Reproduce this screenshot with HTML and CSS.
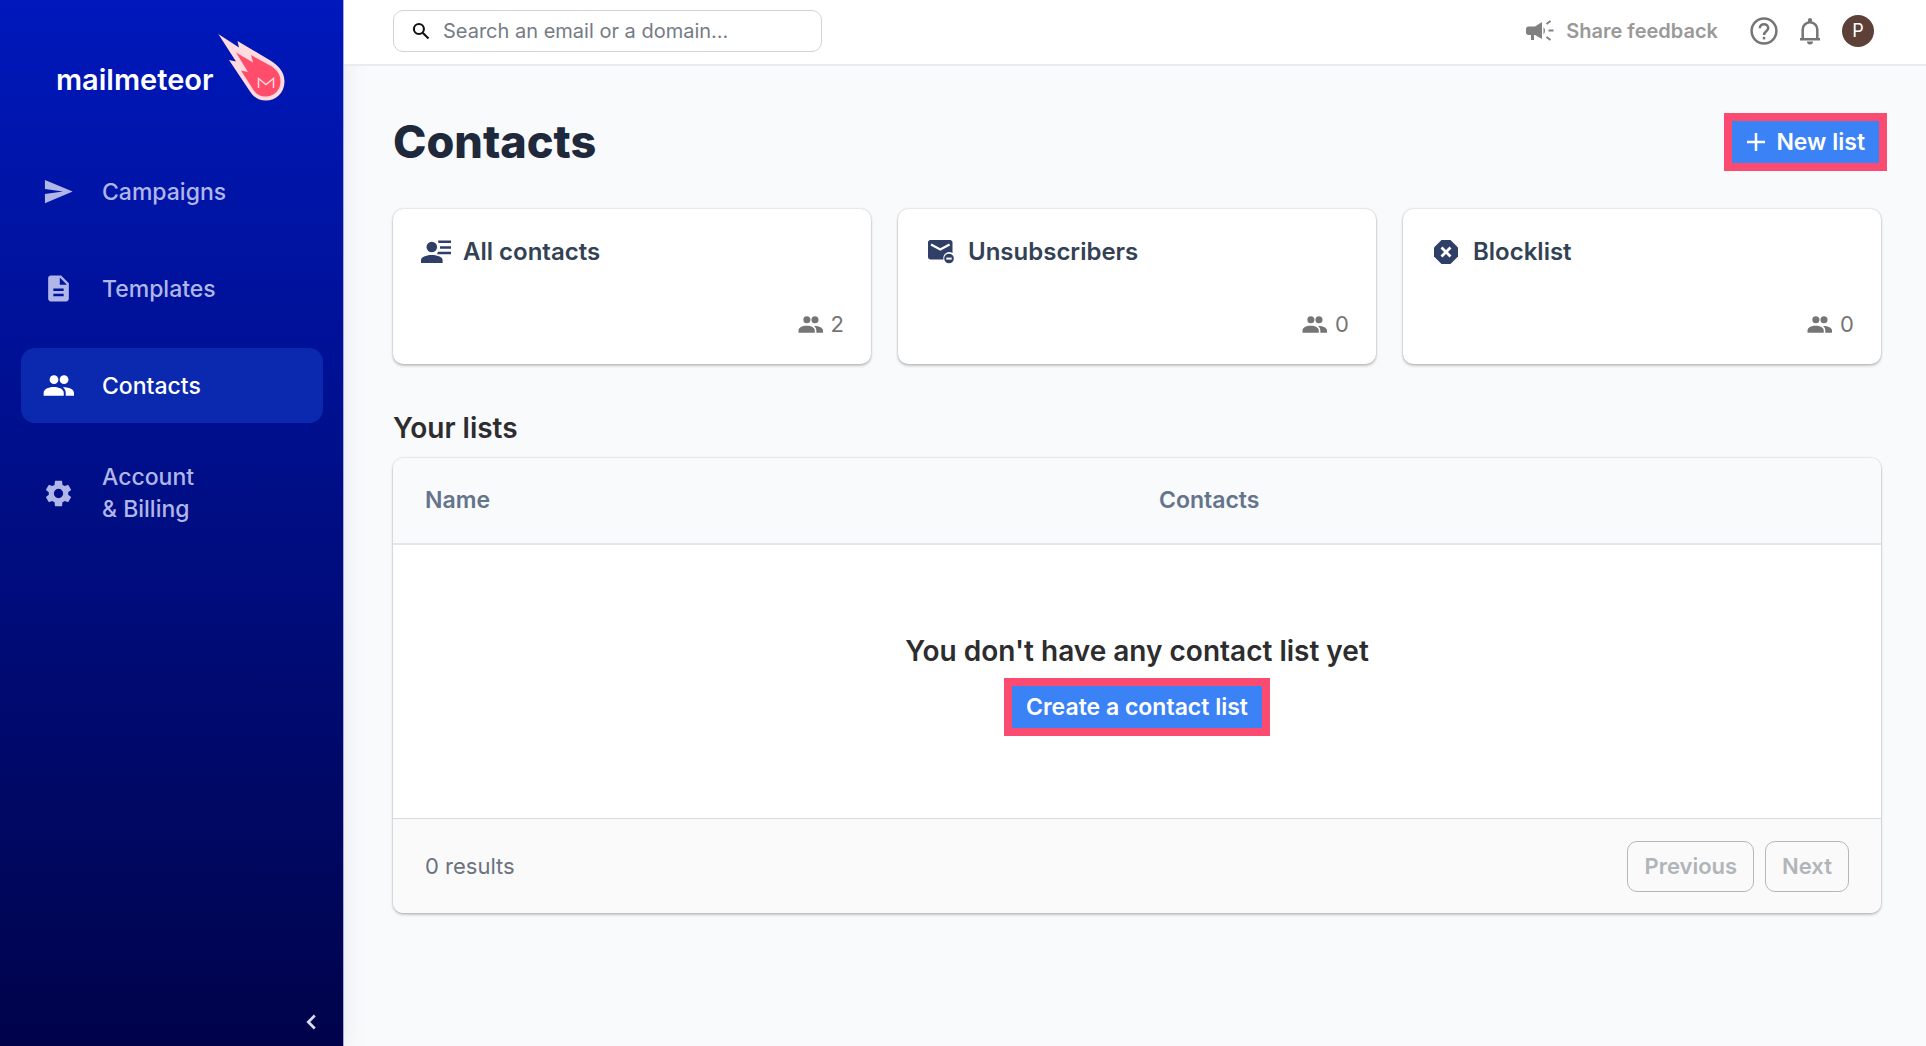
FILE: index.html
```html
<!DOCTYPE html>
<html lang="en">
<head>
    <meta charset="UTF-8">
    <meta name="viewport" content="width=device-width, initial-scale=1">
    <title>Contacts - Mailmeteor</title>
    <link rel="stylesheet" href="styles.css">
</head>
<body>
<!-- Shared icons -->
<svg class="sprite" aria-hidden="true">
    <symbol id="icon-people" viewBox="0 0 24 24">
        <circle cx="8.5" cy="7.5" r="3.4"/>
        <circle cx="16.3" cy="7.5" r="3.4"/>
        <path d="M0.5 20v-2.200c0-2.900 3.500-4.600 7.800-4.600s7.800 1.700 7.800 4.600V20zM17.600 20v-2.300c0-1.800-.8-3.200-2.200-4.300 4.600-.1 8.600 1.500 8.600 4.400V20z"/>
    </symbol>
</svg>

<div class="app">
    <aside class="sidebar">
        <a class="logo" href="#">
            <span>mailmeteor</span>
            <svg class="logo-meteor" viewBox="0 0 68 68" aria-hidden="true">
                <path fill="#ffdade" d="M1.300 1 22 14.500 20.500 8 52.500 27C60 31.500 67.500 38 67.500 48.500 67.500 60 59 67.500 49 67.500 41 67.500 36 63.500 32 57L12 27 19 28.500z"/>
                <path fill="#ff4d6b" d="M19 19.500 36 29.500 34 22 54 33C59 36 63.500 41 63.500 48.500 63.500 57 57 63.500 49 63.500 42.500 63.500 38.500 60.500 35.500 55.500L24 37.500 31 39z"/>
                <path fill="none" stroke="#ffdade" stroke-width="1.500" d="M41.500 55V45.500L49 51.500 56.500 45.500V55"/>
            </svg>
        </a>
        <nav class="menu">
            <a class="menu-item" href="#">
                <svg viewBox="0 0 24 24"><path d="M1.500 21 23 12 1.500 3v7l14 2-14 2z"/></svg>
                <span>Campaigns</span>
            </a>
            <a class="menu-item" href="#">
                <svg viewBox="0 0 24 24"><path d="M14 2H6c-1.100 0-2 .9-2 2v16c0 1.100.9 2 2 2h12c1.100 0 2-.9 2-2V8zm2 16H8v-2h8zm0-4H8v-2h8zm-3-5V3.500L18.500 9z"/></svg>
                <span>Templates</span>
            </a>
            <a class="menu-item active" href="#" aria-current="page">
                <svg><use href="#icon-people"/></svg>
                <span>Contacts</span>
            </a>
            <a class="menu-item" href="#">
                <svg viewBox="0 0 24 24"><path d="M19.500 12.940c.04-.3.060-.61.060-.94s-.02-.64-.07-.94l2.030-1.580a.49.49 0 0 0 .12-.61l-1.920-3.320a.49.49 0 0 0-.59-.22l-2.390.96a7 7 0 0 0-1.620-.94l-.36-2.840a.48.48 0 0 0-.48-.41h-4.560a.48.48 0 0 0-.47.410l-.36 2.840a7.400 7.400 0 0 0-1.620.94l-2.390-.96a.48.48 0 0 0-.59.220L2.370 8.870a.47.47 0 0 0 .12.610l2.030 1.580a6 6 0 0 0 0 1.880l-2.030 1.580a.49.49 0 0 0-.12.610l1.920 3.320c.12.220.37.290.59.220l2.390-.96c.5.380 1.030.7 1.620.94l.36 2.840c.05.240.24.410.48.410h4.560c.24 0 .44-.17.470-.41l.36-2.840a7 7 0 0 0 1.620-.94l2.390.96c.22.080.47 0 .59-.22l1.920-3.320a.47.47 0 0 0-.12-.61zM12 15.600a3.600 3.600 0 1 1 0-7.200 3.600 3.600 0 0 1 0 7.200z"/></svg>
                <span>Account<br>&amp; Billing</span>
            </a>
        </nav>
        <button class="collapse" type="button" aria-label="Collapse menu">
            <svg viewBox="0 0 24 24"><path d="m15 5-7 7 7 7"/></svg>
        </button>
    </aside>

    <div class="page">
        <header class="topbar">
            <label class="search">
                <svg viewBox="0 0 24 24" aria-hidden="true"><circle cx="9.500" cy="9.500" r="6"/><path d="m14 14 7 7"/></svg>
                <input type="search" placeholder="Search an email or a domain..." aria-label="Search an email or a domain">
            </label>
            <div class="actions">
                <a class="feedback" href="#">
                    <svg viewBox="0 0 28 24" aria-hidden="true">
                        <path d="M2.500 7.500H9L16 3v17l-7-4H8v5H5v-5H2.500C1 16 0 15 0 13.500V10c0-1.500 1-2.500 2.500-2.500zM17.500 8c2 2 2 5.500 0 7.500z"/>
                        <path class="rays" d="m20.500 5 4-3M22.500 11.500h5M20.500 18l4 3"/>
                    </svg>
                    <span>Share feedback</span>
                </a>
                <button class="icon-button" type="button" aria-label="Help">
                    <svg viewBox="0 0 28 28"><circle cx="14" cy="14" r="12.400"/><path d="M9.800 11.200c0-5.500 8.400-5.300 8.400-.2 0 3.200-4.200 3.400-4.200 7"/><path d="M14 19.800v2.600"/></svg>
                </button>
                <button class="icon-button" type="button" aria-label="Notifications">
                    <svg viewBox="0 0 28 28"><path d="M4 22.300h20M6.700 22V12.500a7.300 7.300 0 0 1 14.600 0V22"/><path class="solid" d="M12 5V3a2 2 0 0 1 4 0v2zM11 24.500h6a3 3 0 0 1-6 0z"/></svg>
                </button>
                <button class="avatar" type="button" aria-label="Account">P</button>
            </div>
        </header>

        <main class="content">
            <div class="title-row">
                <h1>Contacts</h1>
                <button class="primary" type="button">
                    <svg viewBox="0 0 20 20" aria-hidden="true"><path d="M10 1v18M1 10h18"/></svg>
                    New list
                </button>
            </div>

            <div class="cards">
                <a class="card" href="#">
                    <span class="card-title">
                        <svg viewBox="0 0 30 24" aria-hidden="true">
                            <circle cx="10.800" cy="7" r="5.300"/>
                            <path d="M0 23v-3c0-2.600 4.500-5 10.800-5s10.800 2.400 10.800 5v3z"/>
                            <path d="M17 .5h13V3H17.500zM19 6.300h11v2.500H19zM17 11.700h13v2.500H16z"/>
                        </svg>
                        All contacts
                    </span>
                    <span class="card-count"><svg aria-hidden="true"><use href="#icon-people"/></svg>2</span>
                </a>
                <a class="card" href="#">
                    <span class="card-title">
                        <svg viewBox="0 0 26 24" aria-hidden="true">
                            <path d="M2.500 0h19.500c1.400 0 2.500 1 2.500 2.500V13a6 6 0 0 0-9 6.500h-13C1 19.500 0 18.500 0 17V2.500C0 1 1 0 2.500 0z"/>
                            <path fill="none" stroke="#fff" stroke-width="2.200" d="m3 4.500 9.300 5 9.300-5"/>
                            <circle cx="21" cy="18.500" r="4.800"/>
                            <path fill="#fff" d="M18.300 17.600h5.400v2h-5.400z"/>
                        </svg>
                        Unsubscribers
                    </span>
                    <span class="card-count"><svg aria-hidden="true"><use href="#icon-people"/></svg>0</span>
                </a>
                <a class="card" href="#">
                    <span class="card-title">
                        <svg viewBox="0 0 24 24" aria-hidden="true">
                            <path d="M7.500 0h9L24 7.500v9L16.500 24h-9L0 16.500v-9z"/>
                            <path fill="none" stroke="#fff" stroke-width="2.800" d="m7.500 7.500 9 9M16.500 7.500l-9 9"/>
                        </svg>
                        Blocklist
                    </span>
                    <span class="card-count"><svg aria-hidden="true"><use href="#icon-people"/></svg>0</span>
                </a>
            </div>

            <h2>Your lists</h2>
            <section class="panel">
                <table class="lists">
                    <thead>
                        <tr>
                            <th scope="col">Name</th>
                            <th scope="col">Contacts</th>
                        </tr>
                    </thead>
                    <tbody>
                        <tr>
                            <td class="empty" colspan="2">
                                <p>You don't have any contact list yet</p>
                                <button class="primary" type="button">Create a contact list</button>
                            </td>
                        </tr>
                    </tbody>
                </table>
                <footer class="panel-footer">
                    <span>0 results</span>
                    <div class="pager">
                        <button type="button" disabled>Previous</button>
                        <button type="button" disabled>Next</button>
                    </div>
                </footer>
            </section>
        </main>
    </div>
</div>
</body>
</html>
```
FILE: styles.css
```css
* {
    box-sizing: border-box;
}

body {
    margin: 0;
    font-family: Inter, sans-serif;
    font-size: 22px;
    line-height: 32px;
    color: #2d2d2f;
    background-color: #f9fafc;
}

button,
input {
    font: inherit;
}

button {
    cursor: pointer;
}

a {
    color: inherit;
    text-decoration: none;
}

.sprite {
    display: none;
}

.app {
    display: flex;
    min-height: 100vh;
}

/* Sidebar */
.sidebar {
    display: flex;
    flex-direction: column;
    flex: 0 0 344px;
    padding: 33px 20px 8px 21px;
    background: linear-gradient(#0018bc, #00034a);
    border-right: 1px solid #a9abd6;
    box-shadow: 0 0 24px rgba(0, 0, 60, 0.08);
}

.logo {
    display: flex;
    align-items: center;
    gap: 4px;
    height: 68px;
    margin-bottom: 53px;
    padding-left: 35px;
    color: #fff;
    font-size: 29px;
    font-weight: 600;
}

.logo span {
    padding-top: 26px;
}

.logo-meteor {
    width: 68px;
    height: 68px;
}

.menu {
    display: flex;
    flex-direction: column;
    gap: 22px;
}

.menu-item {
    display: flex;
    align-items: center;
    gap: 28px;
    min-height: 75px;
    padding: 16px 22px;
    border-radius: 14px;
    color: #b0b6e8;
    font-size: 23px;
    font-weight: 500;
}

.menu-item svg {
    width: 31px;
    height: 31px;
    fill: currentColor;
}

.menu-item.active {
    background-color: #0b29ae;
    color: #fff;
}

.collapse {
    align-self: flex-end;
    width: 22px;
    height: 32px;
    margin-top: auto;
    padding: 0;
    border: 0;
    background: none;
}

.collapse svg {
    display: block;
    width: 22px;
    height: 22px;
    fill: none;
    stroke: #dadcf5;
    stroke-width: 3;
}

/* Top bar */
.page {
    flex: 1;
    min-width: 0;
}

.topbar {
    display: flex;
    align-items: center;
    justify-content: space-between;
    height: 66px;
    padding: 0 52px 2px 49px;
    background-color: #fff;
    border-bottom: 2px solid #e9ebee;
}

.search {
    display: flex;
    align-items: center;
    gap: 12px;
    width: 429px;
    height: 42px;
    padding: 0 17px;
    border: 1px solid #cfd3da;
    border-radius: 10px;
}

.search svg {
    width: 20px;
    height: 20px;
    fill: none;
    stroke: #111;
    stroke-width: 2.5;
}

.search input {
    flex: 1;
    min-width: 0;
    padding: 0;
    border: 0;
    outline: 0;
    background: none;
    font-size: 20px;
}

.search input::placeholder {
    color: #757b85;
}

.actions {
    display: flex;
    align-items: center;
    gap: 18px;
}

.feedback {
    display: flex;
    align-items: center;
    gap: 12px;
    margin-right: 14px;
    color: #999;
    font-size: 20px;
    font-weight: 600;
}

.feedback svg {
    width: 28px;
    height: 24px;
    fill: #808080;
}

.feedback .rays {
    stroke: #808080;
    stroke-width: 2;
}

.icon-button {
    width: 28px;
    height: 28px;
    padding: 0;
    border: 0;
    background: none;
}

.icon-button svg {
    display: block;
    fill: none;
    stroke: #757575;
    stroke-width: 2.5;
}

.icon-button .solid {
    fill: #757575;
    stroke: none;
}

.avatar {
    width: 32px;
    height: 32px;
    padding: 0;
    border: 0;
    border-radius: 50%;
    background-color: #5d4037;
    color: #fff;
    font-size: 18px;
}

/* Content */
.content {
    padding: 48px 45px 48px 49px;
}

.title-row {
    display: flex;
    align-items: center;
    justify-content: space-between;
    margin-bottom: 39px;
}

h1 {
    margin: 0;
    color: #1e293b;
    font-size: 45px;
    font-weight: 800;
    line-height: 56px;
}

.primary {
    display: inline-flex;
    align-items: center;
    justify-content: center;
    gap: 10px;
    height: 46px;
    padding: 0 16px;
    border: 0;
    outline: 8px solid #fb4b70;
    outline-offset: -2px;
    background-color: #3b82f6;
    color: #fff;
    font-size: 23px;
    font-weight: 600;
}

.primary svg {
    width: 20px;
    height: 20px;
    stroke: #fff;
    stroke-width: 2.5;
}

.cards {
    display: grid;
    grid-template-columns: repeat(3, 1fr);
    gap: 27px;
    margin-bottom: 46px;
}

.card,
.panel {
    background-color: #fff;
    border-radius: 10px;
    box-shadow: 0 0 2px rgba(0, 0, 0, 0.25), 0 2px 3px rgba(0, 0, 0, 0.2);
}

.card {
    display: flex;
    flex-direction: column;
    justify-content: space-between;
    height: 155px;
    padding: 27px 27px 24px 28px;
}

.card-title {
    display: flex;
    align-items: center;
    gap: 12px;
    color: #334155;
    font-size: 24px;
    font-weight: 600;
}

.card-title svg {
    width: 30px;
    height: 24px;
    fill: #2f3f68;
}

.card-count {
    display: flex;
    align-items: center;
    justify-content: flex-end;
    gap: 8px;
    color: #757575;
}

.card-count svg {
    width: 25px;
    height: 25px;
    fill: #757575;
}

h2,
.empty p {
    font-size: 28px;
    font-weight: 600;
    line-height: 36px;
}

h2 {
    margin: 0 0 12px;
}

.panel {
    overflow: hidden;
}

.lists {
    width: 100%;
    border-collapse: collapse;
    table-layout: fixed;
}

.lists th {
    height: 86px;
    padding: 0 32px 2px;
    border-bottom: 2px solid #e2e5e9;
    background-color: #f9fafc;
    color: #64748b;
    font-size: 23px;
    font-weight: 600;
    text-align: left;
}

.lists th:first-child {
    width: 734px;
}

.empty {
    height: 274px;
    padding: 0;
    text-align: center;
}

.empty p {
    margin: 0 0 15px;
}

.panel-footer {
    display: flex;
    align-items: center;
    justify-content: space-between;
    height: 95px;
    padding: 0 32px;
    border-top: 1px solid #d8dadd;
    background-color: #fafafb;
    color: #6b7280;
}

.pager {
    display: flex;
    gap: 11px;
}

.pager button {
    height: 51px;
    padding: 0 16px;
    border: 1px solid #b4b7bb;
    border-radius: 10px;
    background: none;
    color: #b1b5ba;
    font-weight: 600;
    cursor: default;
}
```
